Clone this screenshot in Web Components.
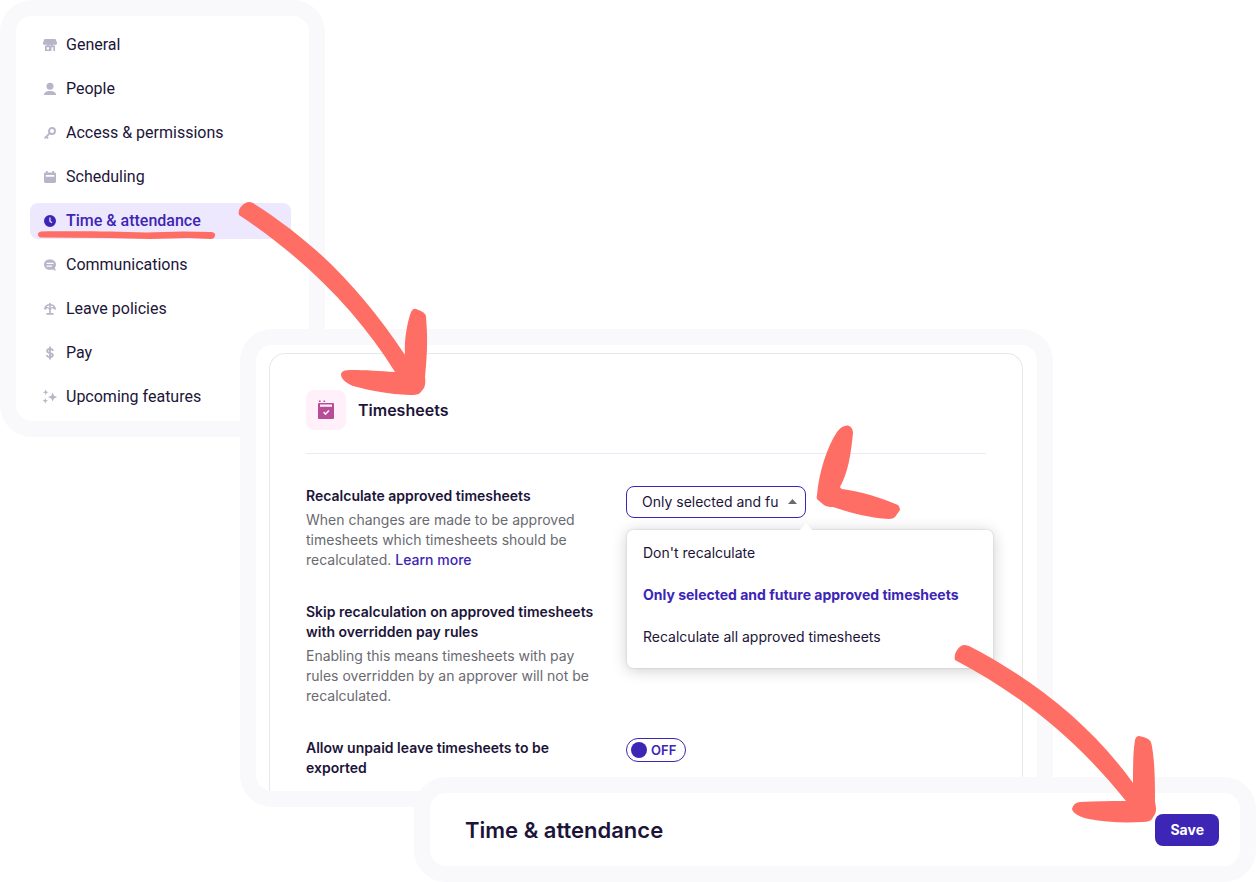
<!DOCTYPE html>
<html lang="en">
<head>
<meta charset="utf-8">
<title>Time &amp; attendance</title>
<style>
    body {
        margin: 0;
        background: #fff;
        --ink: #1c1539;
        --muted: #6a6a70;
        --brand: #3d25b5;
        --marker: #ff6e64;
        color: var(--ink);
        font-family: Inter, "Liberation Sans", sans-serif;
        font-size: 14px;
        line-height: 20px;
    }
</style>
</head>
<body>
<settings-guide></settings-guide>

<script>
const icons = {
    general: '<path d="M2.500 2h11l1.500 3.600v.9a1.700 1.700 0 0 1-3.200.5 1.900 1.900 0 0 1-3.800 0 1.900 1.900 0 0 1-3.800 0A1.700 1.700 0 0 1 1 6.500v-.9z"/><path fill-rule="evenodd" d="M3 8.600h10V14h-1.700v-3.700H9.500V14H3zM4.700 10.200v2.200h2.300v-2.200z"/>',
    people: '<circle cx="8" cy="5.300" r="3.500"/><path d="M2 14c0-2.700 2.500-4 6-4s6 1.300 6 4z"/>',
    access: '<path fill="none" stroke="currentColor" stroke-width="1.800" d="M7.600 8.400 2.600 13.400M4.300 11.500l1.800 1.800"/><circle cx="10" cy="6" r="3" fill="none" stroke="currentColor" stroke-width="1.900"/>',
    scheduling: '<path fill-rule="evenodd" d="M4 2h1.700v1.400h4.600V2H12v1.400h.6c.8 0 1.400.6 1.400 1.400v7.800c0 .8-.6 1.400-1.400 1.400H3.400c-.8 0-1.400-.6-1.400-1.400V4.800c0-.8.6-1.400 1.400-1.400H4zM3.800 6v1.700h8.400V6z"/>',
    time: '<path fill-rule="evenodd" d="M8 2a6 6 0 1 1 0 12A6 6 0 0 1 8 2zM7.300 4.500v4l2.300 1.800.8-1-1.800-1.400V4.500z"/>',
    comms: '<path fill-rule="evenodd" d="M8 2.500c3.500 0 6 2.100 6 5 0 1.300-.5 2.300-1.200 3.100l1 3.200-3.400-1.300c-.7.2-1.500.3-2.400.3-3.500 0-6-2.200-6-5.300s2.500-5 6-5zM4.500 5.700V7h7V5.700zm0 2.800v1.300H10V8.500z"/>',
    leave: '<path fill-rule="evenodd" d="M7.200 2h1.600v1c3 .3 5.200 2.500 5.200 5.500h-2.200c-.2-.8-.6-1.200-1.200-1.200-.8 0-1.200.5-1.200 1.200h-.6V12h2.700v1.800h-7V12h2.700V8.500h-.6c0-.7-.4-1.200-1.200-1.200-.6 0-1 .4-1.200 1.200H2C2 5.500 4.200 3.300 7.200 3zM7.200 4.500c-1.500.2-2.500.8-3 1.700 1.200-.4 2.300-.1 3 .8zm1.600 0V7c.7-.9 1.800-1.200 3-.8-.5-.9-1.500-1.500-3-1.700z"/>',
    pay: '<path fill="none" stroke="currentColor" stroke-width="1.800" d="M11 5.800C10.800 4.500 9.600 4 8 4s-2.900.6-2.900 2c0 3 5.800 1.100 5.800 4 0 1.400-1.200 2-2.900 2s-3-.7-3.100-2M8 1.500v13"/>',
    upcoming: '<path d="M10.600 3.600 12 6.700l3.200 1.300-3.200 1.400-1.400 3.200-1.300-3.200L6 8l3.300-1.300zM3.700.4l.8 2.100 2.100.8-2.100.8-.8 2.200-.8-2.200-2.100-.8 2.100-.8zM3.300 8.900l.8 2.100 2 .8-2 .8-.8 2.200-.8-2.200-2-.8 2-.8z"/>',
    timesheet: '<path fill-rule="evenodd" d="M1 3h14a1 1 0 0 1 1 1v14a1 1 0 0 1-1 1H1a1 1 0 0 1-1-1V4a1 1 0 0 1 1-1zM2 4.500v2.300h12V4.500zM5 12.700l2.600 2.600 3.900-4.200-1.200-1.100-2.700 2.900-1.400-1.400zM1 .5h1.600v1.600H1zM5.500.5h1.600v1.600H5.500z"/>'
};

// defines an element whose shadow root is cloned from one template
function define(name, html, setup) {
    const template = document.createElement('template');
    template.innerHTML = html;
    customElements.define(name, class extends HTMLElement {
        static get observedAttributes() {
            return ['name'];
        }
        constructor() {
            super();
            this.attachShadow({ mode: 'open' });
            this.shadowRoot.appendChild(template.content.cloneNode(true));
        }
        connectedCallback() {
            if (setup) setup(this, this.shadowRoot);
        }
        attributeChangedCallback() {
            if (setup) setup(this, this.shadowRoot);
        }
    });
}

define('app-icon', `
    <style>
        :host { display: block; flex: none; width: 16px; height: 16px; }
        svg { display: block; width: 100%; height: 100%; fill: currentColor; }
    </style>
    <svg aria-hidden="true"></svg>
`, (el, root) => {
    const svg = root.querySelector('svg');
    svg.setAttribute('viewBox', el.getAttribute('box') || '0 0 16 16');
    svg.innerHTML = icons[el.getAttribute('name')] || '';
});

define('soft-panel', `
    <style>
        :host {
            display: block;
            position: relative;
            box-sizing: border-box;
            padding: 16px;
            border-radius: 32px;
            background: #f9f9fc;
        }
        .inner { border-radius: 16px; background: #fff; }
    </style>
    <div class="inner"><slot></slot></div>
    <slot name="marker"></slot>
`);

define('nav-item', `
    <style>
        :host { display: block; position: relative; }
        a {
            display: flex;
            align-items: center;
            gap: 8px;
            padding: 8px 12px;
            border-radius: 8px;
            color: var(--ink);
            font-family: Roboto, "Liberation Sans", sans-serif;
            font-size: 16px;
            text-decoration: none;
        }
        app-icon { color: #b7b5c8; }
        :host([active]) a { background: #eee8ff; color: var(--brand); font-weight: 500; }
        :host([active]) app-icon { color: inherit; }
    </style>
    <a href="#"><app-icon></app-icon><slot></slot></a>
    <slot name="marker"></slot>
`, (el, root) => {
    root.querySelector('app-icon').setAttribute('name', el.getAttribute('icon'));
    if (el.hasAttribute('active')) root.querySelector('a').setAttribute('aria-current', 'page');
});

define('setting-row', `
    <style>
        :host { display: grid; grid-template-columns: 288px 1fr; column-gap: 32px; align-items: start; }
        h3 { margin: 0; font-size: 14px; line-height: 20px; font-weight: 600; }
        .text { margin-top: 4px; color: var(--muted); }
    </style>
    <div>
        <h3><slot name="title"></slot></h3>
        <div class="text"><slot></slot></div>
    </div>
    <slot name="control"></slot>
`, (el, root) => {
    root.querySelector('.text').hidden = el.hasAttribute('plain');
});

define('option-picker', `
    <style>
        :host { display: block; position: relative; width: 180px; }
        select {
            display: block;
            box-sizing: border-box;
            width: 100%;
            height: 32px;
            padding: 0 27px 0 15px;
            border: 1px solid var(--brand);
            border-radius: 8px;
            background: #fff;
            color: var(--ink);
            font: inherit;
            appearance: none;
        }
        .caret {
            position: absolute;
            top: 13px;
            right: 9px;
            width: 9px;
            height: 5px;
            background: #6a6a70;
            clip-path: polygon(50% 0, 100% 100%, 0 100%);
            pointer-events: none;
        }
        .menu {
            position: absolute;
            top: 44px;
            left: 1px;
            z-index: 1;
            box-sizing: border-box;
            width: 366px;
            padding: 2px 0 10px;
            border-radius: 6px;
            background: #fff;
            box-shadow: 0 0 2px rgba(28, 21, 57, .2), 0 2px 16px rgba(0, 0, 0, .2);
        }
        .menu::before {
            content: "";
            position: absolute;
            top: -7px;
            left: 172px;
            width: 14px;
            height: 8px;
            background: #fff;
            clip-path: polygon(50% 0, 100% 100%, 0 100%);
        }
        button {
            display: block;
            width: 100%;
            padding: 11px 16px;
            border: 0;
            background: none;
            color: var(--ink);
            font: inherit;
            text-align: left;
            white-space: nowrap;
        }
        button[aria-selected=true] { color: var(--brand); font-weight: 700; }
    </style>
    <select aria-label="Recalculate approved timesheets"></select>
    <span class="caret"></span>
    <div class="menu" role="listbox"></div>
`, (el, root) => {
    const options = [
        "Don't recalculate",
        'Only selected and future approved timesheets',
        'Recalculate all approved timesheets'
    ];
    const selected = 1;
    root.querySelector('select').innerHTML = options.map((text, i) =>
        `<option${i === selected ? ' selected' : ''}>${text}</option>`).join('');
    root.querySelector('.menu').innerHTML = options.map((text, i) =>
        `<button type="button" role="option" aria-selected="${i === selected}">${text}</button>`).join('');
});

define('toggle-switch', `
    <style>
        :host { display: block; }
        label {
            display: inline-flex;
            align-items: center;
            gap: 4px;
            box-sizing: border-box;
            width: 60px;
            height: 24px;
            padding: 0 4px;
            border: 1px solid var(--brand);
            border-radius: 12px;
            color: var(--brand);
            font-size: 13px;
            font-weight: 600;
        }
        input { flex: none; width: 16px; height: 16px; margin: 0; border-radius: 50%; background: var(--brand); appearance: none; }
    </style>
    <label><input type="checkbox" role="switch"><span>OFF</span></label>
`);

define('settings-menu', `
    <style>
        :host { display: block; }
        nav { display: flex; flex-direction: column; gap: 8px; padding: 11px 18px 6px 14px; }
        .underline { position: absolute; left: 8px; top: 27px; width: 178px; height: 10px; fill: var(--marker); }
    </style>
    <nav>
        <nav-item icon="general">General</nav-item>
        <nav-item icon="people">People</nav-item>
        <nav-item icon="access">Access &amp; permissions</nav-item>
        <nav-item icon="scheduling">Scheduling</nav-item>
        <nav-item icon="time" active>Time &amp; attendance
            <svg slot="marker" class="underline" viewBox="0 0 178 10">
                <path d="M3 1.500C45 1 75 1.500 108 2.500L145 1.500 174 2Q178 3 177 6 176 9 173 9L150 8 112 9 70 8 3 7.500Q0 7 0 4.500 0 2 3 1.500z"/>
            </svg>
        </nav-item>
        <nav-item icon="comms">Communications</nav-item>
        <nav-item icon="leave">Leave policies</nav-item>
        <nav-item icon="pay">Pay</nav-item>
        <nav-item icon="upcoming">Upcoming features</nav-item>
    </nav>
`);

define('timesheet-settings', `
    <style>
        :host { display: block; padding: 8px 14px 0 13px; }
        section {
            padding: 36px 36px 13px;
            border: 1px solid #e8e8ea;
            border-bottom: 0;
            border-radius: 16px 16px 0 0;
        }
        header {
            display: flex;
            align-items: center;
            gap: 12px;
            padding-bottom: 23px;
            border-bottom: 1px solid #ebe9f5;
        }
        .badge {
            display: grid;
            place-items: center;
            width: 40px;
            height: 40px;
            border-radius: 8px;
            background: #fff0fa;
            color: #b84c97;
        }
        .badge app-icon { height: 20px; }
        h2 { margin: 0; font-size: 16px; line-height: 24px; font-weight: 600; }
        a { color: var(--brand); font-weight: 500; text-decoration: none; }
        .rows { display: flex; flex-direction: column; gap: 32px; padding-top: 32px; }
        /* the link never wraps away from the last word */
        .tail { white-space: nowrap; }
    </style>
    <section>
        <header>
            <span class="badge"><app-icon name="timesheet" box="0 0 16 20"></app-icon></span>
            <h2>Timesheets</h2>
        </header>
        <div class="rows">
            <setting-row>
                <span slot="title">Recalculate approved timesheets</span>
                <span>When changes are made to be approved timesheets which timesheets should be <span class="tail">recalculated. <a href="#">Learn more</a></span></span>
                <option-picker slot="control"></option-picker>
            </setting-row>
            <setting-row>
                <span slot="title">Skip recalculation on approved timesheets with overridden pay rules</span>
                <span>Enabling this means timesheets with pay rules overridden by an approver will not be recalculated.</span>
            </setting-row>
            <setting-row plain>
                <span slot="title">Allow unpaid leave timesheets to be exported</span>
                <toggle-switch slot="control"></toggle-switch>
            </setting-row>
        </div>
    </section>
`);

define('save-bar', `
    <style>
        :host { display: flex; align-items: center; justify-content: space-between; padding: 21px 21px 20px 35px; }
        h1 { margin: 0; font-size: 22px; line-height: 32px; font-weight: 600; }
        button {
            height: 32px;
            padding: 0 15px;
            border: 0;
            border-radius: 8px;
            background: var(--brand);
            color: #fff;
            font: inherit;
            font-weight: 700;
        }
    </style>
    <h1>Time &amp; attendance</h1>
    <button type="button">Save</button>
`);

define('settings-guide', `
    <style>
        :host { display: block; }
        .menu { width: 325px; }
        .timesheets { margin: -108px 203px 0 240px; }
        .save { margin: -30px 0 0 414px; }
        /* hand drawn marks lie over every panel */
        .mark { position: absolute; z-index: 5; fill: var(--marker); pointer-events: none; }
        .to-timesheets { left: 234px; top: 196px; width: 200px; height: 204px; }
        .at-picker { left: 572px; top: 91px; width: 94px; height: 104px; }
        .to-save { right: 94px; top: -137px; width: 212px; height: 188px; }
    </style>
    <main>
        <soft-panel class="menu">
            <settings-menu></settings-menu>
            <svg slot="marker" class="mark to-timesheets" viewBox="234 196 200 204">
                <path d="M239 215C237 209 244 202 249 202Q251 202 253 203C316 243 361 289 405 355 404 341 407 323 411 312Q413 308 416 309 426 312 426 317C428 340 427 356 425 377Q426 384 424 388L420 393Q418 395 410 395C388 394 372 391 353 386 343 382 339 376 342 372Q344 370 350 370C367 370 380 371 395 372 361 317 310 262 239 215z"/>
            </svg>
        </soft-panel>
        <soft-panel class="timesheets">
            <timesheet-settings></timesheet-settings>
            <svg slot="marker" class="mark at-picker" viewBox="812 420 94 104">
                <path d="M837 432Q842 425 848 425.500 853 427 853 433C851 454 848 473 840 487Q840 488 842 489C863 492 882 498 898 505Q900 507 900 510L895 517Q893 519 889 519C870 518 851 513 833 507Q827 507 824 505L818 500Q816 499 817 495C819 472 827 447 837 432z"/>
            </svg>
        </soft-panel>
        <soft-panel class="save">
            <save-bar></save-bar>
            <svg slot="marker" class="mark to-save" viewBox="950 640 212 188">
                <path d="M955 660C953 653 960 645 964 645Q966 645 969 646C1031 678 1090 723 1133 783 1133 767 1133 752 1135 740Q1136 736 1139 736 1151 738 1151.500 744C1155 762 1155 783 1155 802Q1157 810 1155 814L1152 819Q1150 822 1143 822C1122 823 1104 822 1089 819 1079 817 1073 813 1072 809Q1073 803 1080 802C1095 801 1110 801 1126 801 1079 742 1022 695 955 660z"/>
            </svg>
        </soft-panel>
    </main>
`);
</script>
</body>
</html>
